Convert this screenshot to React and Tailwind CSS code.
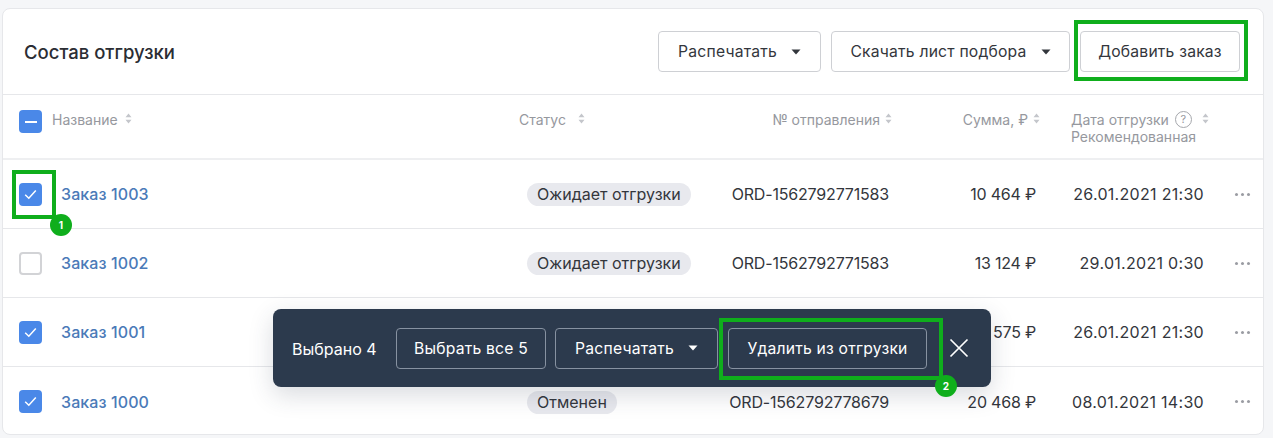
import React from 'react';

const gridCols = 'grid grid-cols-[516px_206px_170px_161px_154px_53px]';

// status and shipment number of order 1001 sit behind the selection bar, so they are not given
const orders = [
    { id: 'Заказ 1003', checked: true, status: 'Ожидает отгрузки', ord: 'ORD-1562792771583', sum: '10 464 ₽', date: '26.01.2021 21:30' },
    { id: 'Заказ 1002', checked: false, status: 'Ожидает отгрузки', ord: 'ORD-1562792771583', sum: '13 124 ₽', date: '29.01.2021 0:30' },
    { id: 'Заказ 1001', checked: true, status: '', ord: '', sum: '15 575 ₽', date: '26.01.2021 21:30' },
    { id: 'Заказ 1000', checked: true, status: 'Отменен', ord: 'ORD-1562792778679', sum: '20 468 ₽', date: '08.01.2021 14:30' },
];

const Caret = () => (
    <svg width="10" height="6" viewBox="0 0 10 6" className="shrink-0">
        <path d="M0.5 0.5h9L5 5.5z" fill="currentColor" />
    </svg>
);

const SortIcon = () => (
    <svg width="7" height="11" viewBox="0 0 7 11" className="shrink-0 text-[#c4c6cb]">
        <path d="M3.5 0.5L6.5 4.2H0.5zM3.5 10.5L0.5 6.8H6.5z" fill="currentColor" />
    </svg>
);

const Checkbox = ({ state }) => {
    if (state === 'off') {
        return <div className="w-[23px] h-[23px] rounded-[4px] border-2 border-[#d2d3d6] bg-white shrink-0" />;
    }
    return (
        <div className="w-[23px] h-[23px] rounded-[4px] bg-[#4a88e8] flex items-center justify-center shrink-0">
            {state === 'mixed' ? (
                <div className="w-[12px] h-[2px] bg-white" />
            ) : (
                <svg width="13" height="11" viewBox="0 0 13 11" fill="none">
                    <path d="M1.2 5.8L4.8 9.2L11.8 1.4" stroke="white" strokeWidth="1.5" />
                </svg>
            )}
        </div>
    );
};

const Button = ({ children, caret, className }) => (
    <button className={`h-[41px] flex items-center justify-center gap-[14px] rounded-[4px] border border-[#ced0d4] bg-white text-[15.7px] text-[#33363c] tracking-[0.2px] whitespace-nowrap ${className}`}>
        <span>{children}</span>
        {caret && <Caret />}
    </button>
);

const DarkButton = ({ children, caret, className }) => (
    <button className={`h-[41px] flex items-center justify-center gap-[14px] rounded-[4px] border border-[#8792a1] text-[15.7px] text-white tracking-[0.2px] whitespace-nowrap ${className}`}>
        <span className="relative top-[1px]">{children}</span>
        {caret && <Caret />}
    </button>
);

const Badge = ({ n, className }) => (
    <div className={`absolute w-[22px] h-[22px] rounded-full bg-[#0fae1c] text-white text-[10px] font-bold flex items-center justify-center ${className}`}>
        {n}
    </div>
);

const App = () => {
    return (
        <div className="relative w-[1273px] h-[438px] overflow-hidden bg-[#f5f6f8] pt-2 pl-[2px] font-['Inter',sans-serif] text-[#33363c]">
            <div className="w-[1262px] h-[427px] bg-white rounded-lg border border-[#e6e7ea] overflow-hidden">
                <div className="h-[86px] flex items-center justify-between pl-[21px] pr-[23px] border-b border-[#e6e7ea]">
                    <h2 className="text-[18.5px] font-medium text-[#2b2d33] relative top-[1px]">Состав отгрузки</h2>
                    <div className="flex gap-[10px]">
                        <Button caret className="w-[163px]">Распечатать</Button>
                        <Button caret className="w-[239px]">Скачать лист подбора</Button>
                        <Button className="w-[160px]">Добавить заказ</Button>
                    </div>
                </div>

                <div className={`${gridCols} h-[65px] border-b-2 border-[#eeeff1] text-[14px] leading-[18px] text-[#96989e]`}>
                    <div className="flex items-start pt-[15px] pl-[16px]">
                        <Checkbox state="mixed" />
                        <span className="ml-[10px] mt-[1px]">Название</span>
                        <span className="ml-[7px] mt-[3px]"><SortIcon /></span>
                    </div>
                    <div className="flex items-start pt-4">
                        <span>Статус</span>
                        <span className="ml-[12px] mt-[2px]"><SortIcon /></span>
                    </div>
                    <div className="flex items-start justify-end pt-4 pr-[3px]">
                        <span>№ отправления</span>
                        <span className="ml-[5px] mt-[2px]"><SortIcon /></span>
                    </div>
                    <div className="flex items-start justify-end pt-4 pr-[16px]">
                        <span>Сумма, ₽</span>
                        <span className="ml-[5px] mt-[2px]"><SortIcon /></span>
                    </div>
                    <div className="pl-[15px] pt-4">
                        <div className="flex items-start h-[17px]">
                            <span className="whitespace-nowrap">Дата отгрузки</span>
                            <div className="ml-[6px] w-[17px] h-[17px] shrink-0 rounded-full border border-[#a5a7ac] flex items-center justify-center text-[11px] leading-none">?</div>
                            <span className="ml-[10px] mt-[2px]"><SortIcon /></span>
                        </div>
                        <div>Рекомендованная</div>
                    </div>
                    <div />
                </div>

                {orders.map((order, i) => (
                    <div key={order.id} className={`${gridCols} h-[69px] items-center text-[16px] ${i < orders.length - 1 ? 'border-b border-[#e6e7ea]' : ''}`}>
                        <div className="flex items-center pl-[16px]">
                            <Checkbox state={order.checked ? 'on' : 'off'} />
                            <a className="ml-[19px] font-medium text-[#4a7ab8] tracking-[0.1px]">{order.id}</a>
                        </div>
                        <div className="pl-2">
                            {order.status && (
                                <span className="inline-block h-[23px] leading-[23px] px-[10px] rounded-full bg-[#e8e9ee]">{order.status}</span>
                            )}
                        </div>
                        <div className="text-right pr-[6px] whitespace-nowrap tracking-[-0.18px]">{order.ord}</div>
                        <div className="text-right pr-[20px] whitespace-nowrap tracking-[-0.2px]">{order.sum}</div>
                        <div className="text-right pr-[6px] whitespace-nowrap tracking-[0.3px]">{order.date}</div>
                        <div className="flex gap-[3px] pl-[25px]">
                            <span className="w-[3px] h-[3px] rounded-full bg-[#9a9ca2]" />
                            <span className="w-[3px] h-[3px] rounded-full bg-[#9a9ca2]" />
                            <span className="w-[3px] h-[3px] rounded-full bg-[#9a9ca2]" />
                        </div>
                    </div>
                ))}
            </div>

            {/* floating selection bar */}
            <div className="absolute left-[273px] top-[309px] w-[718px] h-[78px] rounded-lg bg-[#2c3a4d] shadow-[0_8px_24px_rgba(44,58,77,0.18)] flex items-center pl-[19px] text-white">
                <span className="w-[104px] text-[16px] relative top-[1px]">Выбрано 4</span>
                <DarkButton className="w-[150px]">Выбрать все 5</DarkButton>
                <DarkButton caret className="w-[163px] ml-[9px]">Распечатать</DarkButton>
                <DarkButton className="w-[199px] ml-[10px]">Удалить из отгрузки</DarkButton>
                <svg width="20" height="20" viewBox="0 0 20 20" className="ml-[22px]" fill="none">
                    <path d="M1.5 1.5L18.5 18.5M18.5 1.5L1.5 18.5" stroke="white" strokeWidth="1.7" />
                </svg>
            </div>

            {/* annotations */}
            <div className="absolute left-[1074px] top-[20px] w-[174px] h-[61px] border-4 border-[#0fae1c]" />
            <div className="absolute left-[12px] top-[170px] w-[44px] h-[49px] border-4 border-[#0fae1c]" />
            <Badge n="1" className="left-[50px] top-[214px]" />
            <div className="absolute left-[719px] top-[318px] w-[224px] h-[62px] border-4 border-[#0fae1c]" />
            <Badge n="2" className="left-[935px] top-[375px]" />
        </div>
    );
};

export default App;
